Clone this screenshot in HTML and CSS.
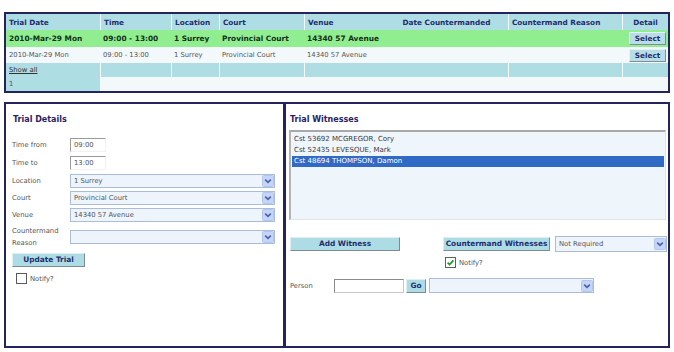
FILE: index.html
```html
<!DOCTYPE html>
<html>
<head>
<meta charset="utf-8">
<link rel="stylesheet" href="styles.css">
</head>
<body>
<div class="page">
  <table class="grid">
    <colgroup>
      <col style="width:94px"><col style="width:71px"><col style="width:48px"><col style="width:85px">
      <col style="width:81px"><col style="width:123px"><col style="width:114px"><col style="width:46px">
    </colgroup>
    <thead>
      <tr class="hdr">
        <th>Trial Date</th><th>Time</th><th>Location</th><th>Court</th><th>Venue</th>
        <th class="ctr nosep">Date Countermanded</th><th>Countermand Reason</th><th class="ctr">Detail</th>
      </tr>
    </thead>
    <tbody>
      <tr class="hit">
        <td>2010-Mar-29 Mon</td><td>09:00 - 13:00</td><td>1 Surrey</td><td>Provincial Court</td>
        <td colspan="2">14340 57 Avenue</td><td></td><td class="btncell"><span class="selbtn">Select</span></td>
      </tr>
      <tr class="row">
        <td>2010-Mar-29 Mon</td><td>09:00 - 13:00</td><td>1 Surrey</td><td>Provincial Court</td>
        <td colspan="2">14340 57 Avenue</td><td></td><td class="btncell"><span class="selbtn">Select</span></td>
      </tr>
      <tr class="pager">
        <td><a class="showall">Show all</a></td><td></td><td></td><td></td><td colspan="2"></td><td></td><td></td>
      </tr>
      <tr class="pager2">
        <td>1</td><td colspan="7"></td>
      </tr>
    </tbody>
  </table>

  <div class="panels">
    <section class="panel left">
      <h2 class="ptitle">Trial Details</h2>
      <div class="form">
        <div class="lbl">Time from</div><div><span class="tb">09:00</span></div>
        <div class="lbl">Time to</div><div><span class="tb">13:00</span></div>
        <div class="lbl">Location</div><div><span class="dd w205"><span>1 Surrey</span><svg viewBox="0 0 12 12"><rect x="0.5" y="0.5" width="11" height="11" rx="1" fill="#c4d5f7" stroke="#b2c6ef"/><path d="M3.2 4.6 L6 7.4 L8.8 4.6" fill="none" stroke="#4d61a8" stroke-width="1.6"/></svg></span></div>
        <div class="lbl">Court</div><div><span class="dd w205"><span>Provincial Court</span><svg viewBox="0 0 12 12"><rect x="0.5" y="0.5" width="11" height="11" rx="1" fill="#c4d5f7" stroke="#b2c6ef"/><path d="M3.2 4.6 L6 7.4 L8.8 4.6" fill="none" stroke="#4d61a8" stroke-width="1.6"/></svg></span></div>
        <div class="lbl">Venue</div><div><span class="dd w205"><span>14340 57 Avenue</span><svg viewBox="0 0 12 12"><rect x="0.5" y="0.5" width="11" height="11" rx="1" fill="#c4d5f7" stroke="#b2c6ef"/><path d="M3.2 4.6 L6 7.4 L8.8 4.6" fill="none" stroke="#4d61a8" stroke-width="1.6"/></svg></span></div>
        <div class="lbl two">Countermand<br>Reason</div><div><span class="dd w205"><span></span><svg viewBox="0 0 12 12"><rect x="0.5" y="0.5" width="11" height="11" rx="1" fill="#c4d5f7" stroke="#b2c6ef"/><path d="M3.2 4.6 L6 7.4 L8.8 4.6" fill="none" stroke="#4d61a8" stroke-width="1.6"/></svg></span></div>
      </div>
      <span class="btn upd">Update Trial</span>
      <div class="chkrow first">
        <svg class="chk" viewBox="0 0 11 11"><rect x="0.5" y="0.5" width="10" height="10" fill="#fff" stroke="#5a5a5a"/></svg>
        <span>Notify?</span>
      </div>
    </section>

    <section class="panel right">
      <h2 class="ptitle">Trial Witnesses</h2>
      <div class="list">
        <div class="item">Cst 53692 MCGREGOR, Cory</div>
        <div class="item">Cst 52435 LEVESQUE, Mark</div>
        <div class="item on">Cst 48694 THOMPSON, Damon</div>
      </div>
      <div class="actions">
        <span class="btn add">Add Witness</span>
        <span class="btn cw">Countermand Witnesses</span>
        <span class="dd nr"><span>Not Required</span><svg viewBox="0 0 12 12"><rect x="0.5" y="0.5" width="11" height="11" rx="1" fill="#c4d5f7" stroke="#b2c6ef"/><path d="M3.2 4.6 L6 7.4 L8.8 4.6" fill="none" stroke="#4d61a8" stroke-width="1.6"/></svg></span>
      </div>
      <div class="chkrow second">
        <svg class="chk" viewBox="0 0 11 11"><rect x="0.5" y="0.5" width="10" height="10" fill="#fff" stroke="#4e6a55"/><path d="M2.6 5.6 L4.6 7.6 L8.4 3.4" fill="none" stroke="#1f9a2a" stroke-width="1.7"/></svg>
        <span>Notify?</span>
      </div>
      <div class="person">
        <span class="plbl">Person</span>
        <span class="tb2"></span>
        <span class="btn go">Go</span>
        <span class="dd pd"><span></span><svg viewBox="0 0 12 12"><rect x="0.5" y="0.5" width="11" height="11" rx="1" fill="#c4d5f7" stroke="#b2c6ef"/><path d="M3.2 4.6 L6 7.4 L8.8 4.6" fill="none" stroke="#4d61a8" stroke-width="1.6"/></svg></span>
      </div>
    </section>
  </div>
</div>
</body>
</html>
```

FILE: styles.css
```css
html, body {
  margin: 0;
  padding: 0;
  background: #fff;
}
body {
  font-family: "DejaVu Sans", Verdana, sans-serif;
  font-size: 6.8px;
  color: #555;
}
.page {
  padding: 12px 4px 0 4px;
}

/* top grid */
.grid {
  width: 666px;
  table-layout: fixed;
  border-collapse: separate;
  border-spacing: 0;
  border: 2px solid #23235e;
}
.grid th, .grid td {
  padding: 0 3px;
  white-space: nowrap;
  overflow: hidden;
  text-align: left;
}
.grid th {
  background: #aedde4;
  color: #1f2d6e;
  font-weight: bold;
  font-size: 7.3px;
  height: 16px;
  border-left: 1px solid #f4fbfc;
}
.grid th:first-child { border-left: none; }
.grid th.nosep { border-left: none; }
.grid th.ctr { text-align: center; }
.grid .hit td {
  background: #90ee90;
  color: #14301a;
  font-weight: bold;
  font-size: 7.4px;
  height: 17px;
}
.grid .row td {
  background: #f3f8fb;
  color: #555;
  height: 16px;
}
.grid td.btncell {
  text-align: right;
  padding-right: 2px;
}
.selbtn {
  display: inline-block;
  width: 37px;
  height: 13px;
  box-sizing: border-box;
  line-height: 11px;
  text-align: center;
  background: #b9dde6;
  border-top: 1px solid #e2f2f6;
  border-left: 1px solid #e2f2f6;
  border-right: 1px solid #7f8f95;
  border-bottom: 1px solid #7f8f95;
  color: #1f2d6e;
  font-weight: bold;
  font-size: 7.3px;
  vertical-align: middle;
}
.grid .pager td {
  background: #aedde4;
  height: 14px;
  border-left: 1px solid #f4fbfc;
}
.grid .pager td:first-child { border-left: none; }
.showall {
  color: #333;
  text-decoration: underline;
}
.grid .pager2 td {
  height: 14px;
  background: #f3f8fb;
}
.grid .pager2 td:first-child {
  background: #aedde4;
}

/* panels */
.panels {
  display: flex;
  margin-top: 9px;
}
.panel {
  box-sizing: border-box;
  height: 246px;
  border: 2px solid #23235e;
}
.panel.left {
  width: 281px;
  padding: 10px 0 0 6px;
}
.panel.right {
  width: 385px;
  padding: 10px 0 0 3px;
  border-left-width: 1px;
}
.ptitle {
  margin: 0;
  font-size: 8px;
  line-height: 12px;
  font-weight: bold;
  color: #27235f;
}
.left .ptitle { margin-left: 1px; }
.right .ptitle { margin-left: 1px; }

.form {
  display: grid;
  grid-template-columns: 58px 205px;
  grid-template-rows: 17px 19px 17px 17px 17px 28px;
  align-items: center;
  margin-top: 10px;
}
.form > div { display: flex; align-items: center; }
.lbl {
  color: #555;
  line-height: 12px;
}
.tb {
  display: inline-block;
  width: 36px;
  height: 14px;
  box-sizing: border-box;
  border-top: 1px solid #9a9a9a;
  border-left: 1px solid #9a9a9a;
  border-right: 1px solid #f2f2f2;
  border-bottom: 1px solid #f2f2f2;
  padding-left: 3px;
  line-height: 12px;
  background: #fff;
  color: #555;
}
.dd {
  display: inline-flex;
  align-items: center;
  justify-content: space-between;
  box-sizing: border-box;
  height: 14px;
  border: 1px solid #aabcd6;
  background: #edf4fc;
  padding-left: 3px;
  color: #555;
}
.dd svg {
  width: 12px;
  height: 12px;
  flex: none;
}
.w205 { width: 205px; }

.btn {
  display: inline-block;
  box-sizing: border-box;
  height: 14px;
  line-height: 12px;
  text-align: center;
  background: #aedce4;
  border-top: 1px solid #dcf0f4;
  border-left: 1px solid #dcf0f4;
  border-right: 1px solid #7b8b91;
  border-bottom: 1px solid #7b8b91;
  color: #1f2d6e;
  font-weight: bold;
  font-size: 7.4px;
}
.upd {
  width: 73px;
  margin-top: 2px;
}
.chkrow {
  display: flex;
  align-items: center;
  gap: 3px;
  color: #555;
}
.chk {
  width: 11px;
  height: 11px;
  flex: none;
}
.chkrow.first {
  margin-top: 6px;
  margin-left: 4px;
}

.list {
  margin-top: 4px;
  width: 377px;
  height: 90px;
  box-sizing: border-box;
  border-top: 2px solid #a8a8a8;
  border-left: 2px solid #b4b4b4;
  border-right: 1px solid #e0e4e8;
  border-bottom: 1px solid #e0e4e8;
  background: #eef5fb;
  padding: 2px 1px;
}
.item {
  height: 11px;
  line-height: 11px;
  padding-left: 2px;
  font-size: 7px;
  color: #3a3a3a;
}
.item.on {
  background: #316ac5;
  color: #fff;
}
.actions {
  display: flex;
  align-items: center;
  margin-top: 16px;
}
.add {
  width: 110px;
  margin-left: 1px;
}
.cw {
  width: 107px;
  margin-left: 43px;
}
.dd.nr {
  width: 112px;
  height: 16px;
  margin-left: 5px;
}
.chkrow.second {
  margin-top: 5px;
  margin-left: 156px;
}
.person {
  display: flex;
  align-items: center;
  margin-top: 10px;
}
.plbl {
  width: 44px;
  margin-left: 1px;
  color: #555;
}
.tb2 {
  display: inline-block;
  width: 70px;
  height: 14px;
  box-sizing: border-box;
  border-top: 1px solid #8a8a8a;
  border-left: 1px solid #8a8a8a;
  border-right: 1px solid #c8c8c8;
  border-bottom: 1px solid #c8c8c8;
  background: #fff;
}
.go {
  width: 20px;
  margin-left: 2px;
}
.dd.pd {
  width: 165px;
  height: 15px;
  margin-left: 3px;
}
```
